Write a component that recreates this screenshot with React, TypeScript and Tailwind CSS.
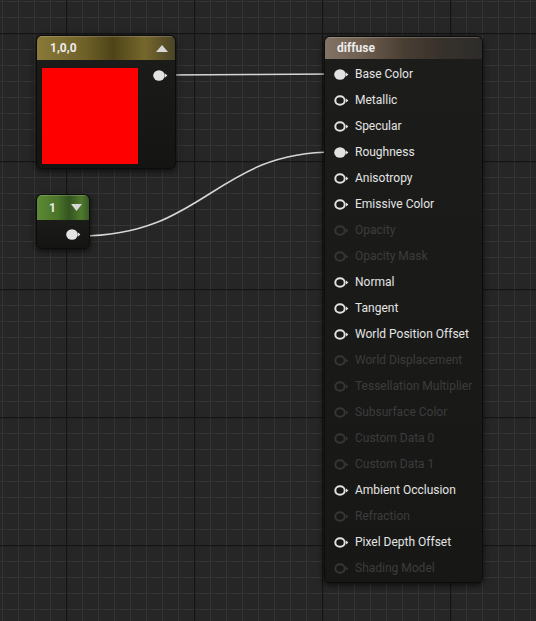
import React from "react";

type Input = { label: string; active?: boolean; linked?: boolean };

const inputs: Input[] = [
  { label: "Base Color", active: true, linked: true },
  { label: "Metallic", active: true },
  { label: "Specular", active: true },
  { label: "Roughness", active: true, linked: true },
  { label: "Anisotropy", active: true },
  { label: "Emissive Color", active: true },
  { label: "Opacity" },
  { label: "Opacity Mask" },
  { label: "Normal", active: true },
  { label: "Tangent", active: true },
  { label: "World Position Offset", active: true },
  { label: "World Displacement" },
  { label: "Tessellation Multiplier" },
  { label: "Subsurface Color" },
  { label: "Custom Data 0" },
  { label: "Custom Data 1" },
  { label: "Ambient Occlusion", active: true },
  { label: "Refraction" },
  { label: "Pixel Depth Offset", active: true },
  { label: "Shading Model" },
];

function Pin({ filled, dim }: { filled?: boolean; dim?: boolean }) {
  const c = dim ? "#363636" : "#e2e2e2";
  return (
    <svg width="15" height="13" viewBox="0 0 15 13" className="shrink-0">
      <ellipse
        cx="6"
        cy="6.5"
        rx={filled ? 5.8 : 4.7}
        ry={filled ? 5.2 : 4.2}
        fill={filled ? c : "none"}
        stroke={c}
        strokeWidth={filled ? 0 : 2}
      />
      <path d="M12 4.6 L14.4 6.5 L12 8.4 Z" fill={c} />
    </svg>
  );
}

function Grid() {
  return (
    <svg className="absolute inset-0" width="536" height="621">
      <defs>
        <pattern id="minor" width="16" height="16" patternUnits="userSpaceOnUse" x="2" y="1">
          <path d="M0 0.5 H16 M0.5 0 V16" stroke="#343434" strokeWidth="1" fill="none" />
        </pattern>
        <pattern id="major" width="128" height="128" patternUnits="userSpaceOnUse" x="66" y="33">
          <path d="M0 0.5 H128 M0.5 0 V128" stroke="#151515" strokeWidth="1.5" fill="none" />
        </pattern>
      </defs>
      <rect width="536" height="621" fill="#262626" />
      <rect width="536" height="621" fill="url(#minor)" />
      <rect width="536" height="621" fill="url(#major)" />
    </svg>
  );
}

function Wires() {
  return (
    <svg className="absolute inset-0 pointer-events-none" width="536" height="621">
      <path d="M168 75 C 250 75, 250 74, 334 74" stroke="#d6d6d6" strokeWidth="1.6" fill="none" />
      <path d="M80 236 C 205 236, 215 152, 334 152" stroke="#d6d6d6" strokeWidth="1.6" fill="none" />
    </svg>
  );
}

export default function App() {
  return (
    <div
      className="relative w-[536px] h-[621px] overflow-hidden bg-[#262626]"
      style={{ fontFamily: "Roboto, 'Liberation Sans', sans-serif" }}
    >
      <Grid />
      <Wires />

      {/* constant3 vector node */}
      <div className="absolute left-[36px] top-[35px] w-[140px] h-[134px] rounded-[6px] bg-[#161715] border border-[#0c0c0c] shadow-[0_2px_6px_rgba(0,0,0,0.7)] overflow-hidden flex flex-col">
        <div className="h-[24px] flex items-center justify-between pl-[13px] pr-[7px] bg-[linear-gradient(90deg,#8a7a38_0%,#6e6028_35%,#4e4418_55%,#76672c_78%,#4a4326_100%)] shadow-[inset_0_1px_0_rgba(255,255,255,0.18)]">
          <span className="text-[12px] font-bold text-[#ececec] leading-none">1,0,0</span>
          <svg width="12" height="7" viewBox="0 0 12 7">
            <path d="M0 7 L6 0 L12 7 Z" fill="#d8d8d8" />
          </svg>
        </div>
        <div className="flex items-start pt-[8px] pl-[5px] bg-[linear-gradient(180deg,#1b1c1a,#141513)] flex-1">
          <div className="w-[96px] h-[96px] bg-[#ff0000]" />
          <div className="ml-[15px] mt-[1px]">
            <Pin filled />
          </div>
        </div>
      </div>

      {/* constant scalar node */}
      <div className="absolute left-[36px] top-[194px] w-[54px] h-[55px] rounded-[6px] bg-[#161715] border border-[#0c0c0c] shadow-[0_2px_6px_rgba(0,0,0,0.7)] overflow-hidden flex flex-col">
        <div className="h-[25px] flex items-center justify-between pl-[12px] pr-[7px] bg-[linear-gradient(90deg,#5c8a34_0%,#4a7428_40%,#345420_62%,#4e7a2c_85%,#3a5a26_100%)] shadow-[inset_0_1px_0_rgba(255,255,255,0.18)]">
          <span className="text-[12px] font-bold text-[#ececec] leading-none">1</span>
          <svg width="11" height="7" viewBox="0 0 11 7">
            <path d="M0 0 L11 0 L5.5 7 Z" fill="#d8d8d8" />
          </svg>
        </div>
        <div className="flex-1 flex items-center pl-[29px] bg-[linear-gradient(180deg,#1b1c1a,#141513)]">
          <Pin filled />
        </div>
      </div>

      {/* material result node */}
      <div className="absolute left-[324px] top-[36px] w-[159px] rounded-[6px] bg-[#1a1b19] border border-[#0c0c0c] shadow-[0_2px_6px_rgba(0,0,0,0.7)] overflow-hidden flex flex-col">
        <div className="h-[22px] flex items-center pl-[12px] bg-[linear-gradient(90deg,#837364_0%,#6c5d4e_25%,#4a3e33_50%,#37312b_75%,#2d2c2a_100%)] shadow-[inset_0_1px_0_rgba(255,255,255,0.2)]">
          <span className="text-[12px] font-bold text-[#ececec] leading-none">diffuse</span>
        </div>
        <div className="flex flex-col pt-[2px] pb-[1px] bg-[linear-gradient(180deg,#1c1d1b,#171816)]">
          {inputs.map((it) => (
            <div key={it.label} className="h-[26px] flex items-center pl-[9px] gap-[6px]">
              <Pin filled={it.linked} dim={!it.active} />
              <span
                className={
                  "text-[12px] leading-none whitespace-nowrap " +
                  (it.active ? "text-[#e4e4e4]" : "text-[#3c3c3c]")
                }
              >
                {it.label}
              </span>
            </div>
          ))}
        </div>
      </div>
    </div>
  );
}
